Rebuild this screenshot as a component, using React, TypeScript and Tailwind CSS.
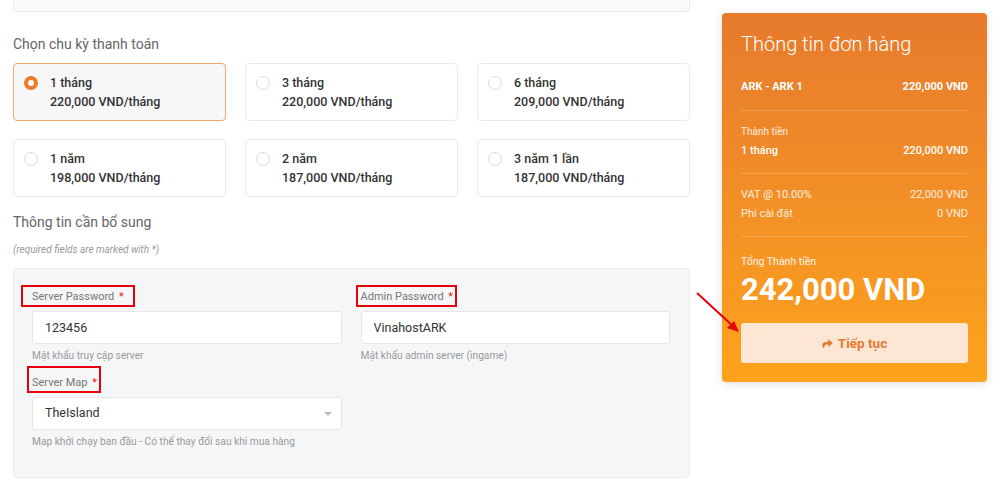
import React, { useState } from 'react';

type Cycle = { id: string; label: string; price: string };

const CYCLES: Cycle[] = [
  { id: '1m', label: '1 tháng', price: '220,000 VND/tháng' },
  { id: '3m', label: '3 tháng', price: '220,000 VND/tháng' },
  { id: '6m', label: '6 tháng', price: '209,000 VND/tháng' },
  { id: '1y', label: '1 năm', price: '198,000 VND/tháng' },
  { id: '2y', label: '2 năm', price: '187,000 VND/tháng' },
  { id: '3y', label: '3 năm 1 lần', price: '187,000 VND/tháng' },
];

const CycleCard: React.FC<{ cycle: Cycle; selected: boolean; onSelect: () => void }> = ({ cycle, selected, onSelect }) => (
  <button
    type="button"
    onClick={onSelect}
    className={`flex h-[58px] items-start gap-[12px] rounded-[4px] border pl-[10px] pt-[9px] text-left ${
      selected ? 'border-[#f3a56c] bg-[#f7f7f8]' : 'border-[#ebebeb] bg-white'
    }`}
  >
    <span className="mt-[3px] flex h-[14px] w-[14px] items-center justify-center">
      {selected ? (
        <span className="h-[14px] w-[14px] rounded-full border-[4px] border-[#ee7a2c] bg-white" />
      ) : (
        <span className="h-[14px] w-[14px] rounded-full border border-[#dcdcdc] bg-white" />
      )}
    </span>
    <span className="flex flex-col text-[12.5px] font-medium leading-[19px] text-[#333]">
      <span>{cycle.label}</span>
      <span>{cycle.price}</span>
    </span>
  </button>
);

const Field: React.FC<{
  label: string;
  help: string;
  boxClass: string;
  children: React.ReactNode;
  labelTop?: string;
}> = ({ label, help, boxClass, children, labelTop = '' }) => (
  <div className="flex flex-col">
    <div className={`relative text-[11px] leading-[16px] text-[#777] ${labelTop}`}>
      {label} <span className="ml-[2px] text-[#e02020]">*</span>
      {/* red annotation box */}
      <span className={`pointer-events-none absolute border-2 border-[#e8000b] ${boxClass}`} />
    </div>
    <div className="mt-[6px]">{children}</div>
    <div className="mt-[5px] text-[10.2px] leading-[14px] text-[#9a9a9a]">{help}</div>
  </div>
);

const OrderRow: React.FC<{ left: string; right: string; className?: string }> = ({ left, right, className = '' }) => (
  <div className={`flex justify-between ${className}`}>
    <span>{left}</span>
    <span>{right}</span>
  </div>
);

export default function App() {
  const [cycle, setCycle] = useState('1m');
  const [serverPassword, setServerPassword] = useState('123456');
  const [adminPassword, setAdminPassword] = useState('VinahostARK');

  return (
    <div className="relative h-[488px] w-[1000px] overflow-hidden bg-white font-['Roboto',sans-serif]">
      <div className="flex gap-[32px] pl-[13px]">
        {/* left column */}
        <div className="flex w-[677px] flex-col">
          <div className="h-[12px] rounded-b-[4px] border-x border-b border-[#ebebeb] bg-[#fafafa]" />

          <h3 className="mt-[22px] text-[14px] leading-[20px] text-[#666]">Chọn chu kỳ thanh toán</h3>

          <div className="mt-[9px] grid grid-cols-3 gap-x-[19px] gap-y-[18px]">
            {CYCLES.map((c) => (
              <CycleCard key={c.id} cycle={c} selected={cycle === c.id} onSelect={() => setCycle(c.id)} />
            ))}
          </div>

          <h3 className="mt-[15px] text-[14px] leading-[20px] text-[#666]">Thông tin cần bổ sung</h3>
          <p className="mt-[11px] text-[10px] italic leading-[14px] text-[#999]">(required fields are marked with *)</p>

          <div className="mt-[11px] h-[210px] rounded-[4px] border border-[#ececec] bg-[#f5f6f8] pl-[18px] pr-[19px] pt-[20px]">
            <div className="grid grid-cols-2 gap-x-[19px]">
              <Field label="Server Password" help="Mật khẩu truy cập server" boxClass="-left-[11px] -top-[4px] h-[22px] w-[114px]">
                <input
                  value={serverPassword}
                  onChange={(e) => setServerPassword(e.target.value)}
                  className="h-[33px] w-full rounded-[3px] border border-[#e6e6e6] bg-white px-[12px] text-[12.5px] text-[#333] outline-none"
                />
              </Field>
              <Field label="Admin Password" help="Mật khẩu admin server (ingame)" boxClass="-left-[5px] -top-[4px] h-[22px] w-[101px]">
                <input
                  value={adminPassword}
                  onChange={(e) => setAdminPassword(e.target.value)}
                  className="h-[33px] w-full rounded-[3px] border border-[#e6e6e6] bg-white px-[12px] text-[12.5px] text-[#333] outline-none"
                />
              </Field>
              <Field
                label="Server Map"
                help="Map khởi chạy ban đầu - Có thể thay đổi sau khi mua hàng"
                boxClass="-left-[5px] -top-[9px] h-[27px] w-[74px]"
                labelTop="mt-[12px]"
              >
                <div className="flex h-[33px] w-full items-center justify-between rounded-[3px] border border-[#e6e6e6] bg-white pl-[12px] pr-[9px] text-[12.5px] text-[#333]">
                  <span>TheIsland</span>
                  <span className="h-0 w-0 border-x-[4px] border-t-[4px] border-x-transparent border-t-[#bbb]" />
                </div>
              </Field>
            </div>
          </div>
        </div>

        {/* right column: order summary */}
        <div className="mt-[13px] flex h-[369px] w-[265px] flex-col rounded-[4px] bg-linear-to-b from-[#e77a2d] to-[#fda31b] px-[19px] pt-[17px] text-white shadow-[0_2px_10px_rgba(0,0,0,0.12)]">
          <h2 className="text-[20px] font-light leading-[28px]">Thông tin đơn hàng</h2>

          <OrderRow left="ARK - ARK 1" right="220,000 VND" className="mt-[21px] text-[11px] font-bold leading-[16px]" />
          <div className="mt-[15px] h-px bg-white/20" />

          <div className="mt-[14px] text-[10px] leading-[14px] text-white/85">Thành tiền</div>
          <OrderRow left="1 tháng" right="220,000 VND" className="mt-[4px] text-[11px] font-medium leading-[16px]" />
          <div className="mt-[14px] h-px bg-white/20" />

          <OrderRow left="VAT @ 10.00%" right="22,000 VND" className="mt-[13px] text-[11px] leading-[16px] text-white/85" />
          <OrderRow left="Phí cài đặt" right="0 VND" className="mt-[3px] text-[11px] leading-[16px] text-white/85" />
          <div className="mt-[14px] h-px bg-white/20" />

          <div className="mt-[18px] text-[10.5px] leading-[14px] text-white/90">Tổng Thành tiền</div>
          <div className="mt-[3px] text-[31px] font-bold leading-[36px]">242,000 VND</div>

          <button
            type="button"
            className="mt-[15px] flex h-[40px] items-center justify-center gap-[5px] rounded-[3px] bg-[#fde6d3] text-[13.5px] font-bold text-[#e57a32]"
          >
            <svg width="11" height="9" viewBox="0 0 512 448" fill="currentColor">
              <path d="M503.7 186.3l-176-152C312.3 21 288 31.8 288 52.6v80.1C127.4 134.5 0 166.7 0 318.9c0 61.4 39.6 122.3 83.3 154.1 13.7 9.9 33.1-2.5 28.1-18.6C66 308.9 132.6 272.6 288 270.2V358c0 20.9 24.3 31.7 39.7 18.3l176-152c11.1-9.6 11.1-26.8 0-36z" />
            </svg>
            Tiếp tục
          </button>
        </div>
      </div>

      {/* red annotation arrow */}
      <svg className="pointer-events-none absolute left-[694px] top-[290px]" width="50" height="46" viewBox="0 0 50 46">
        <line x1="3" y1="3" x2="40" y2="37" stroke="#e8000b" strokeWidth="2" />
        <path d="M45 42 L33 38 L40 31 Z" fill="#e8000b" />
      </svg>
    </div>
  );
}
